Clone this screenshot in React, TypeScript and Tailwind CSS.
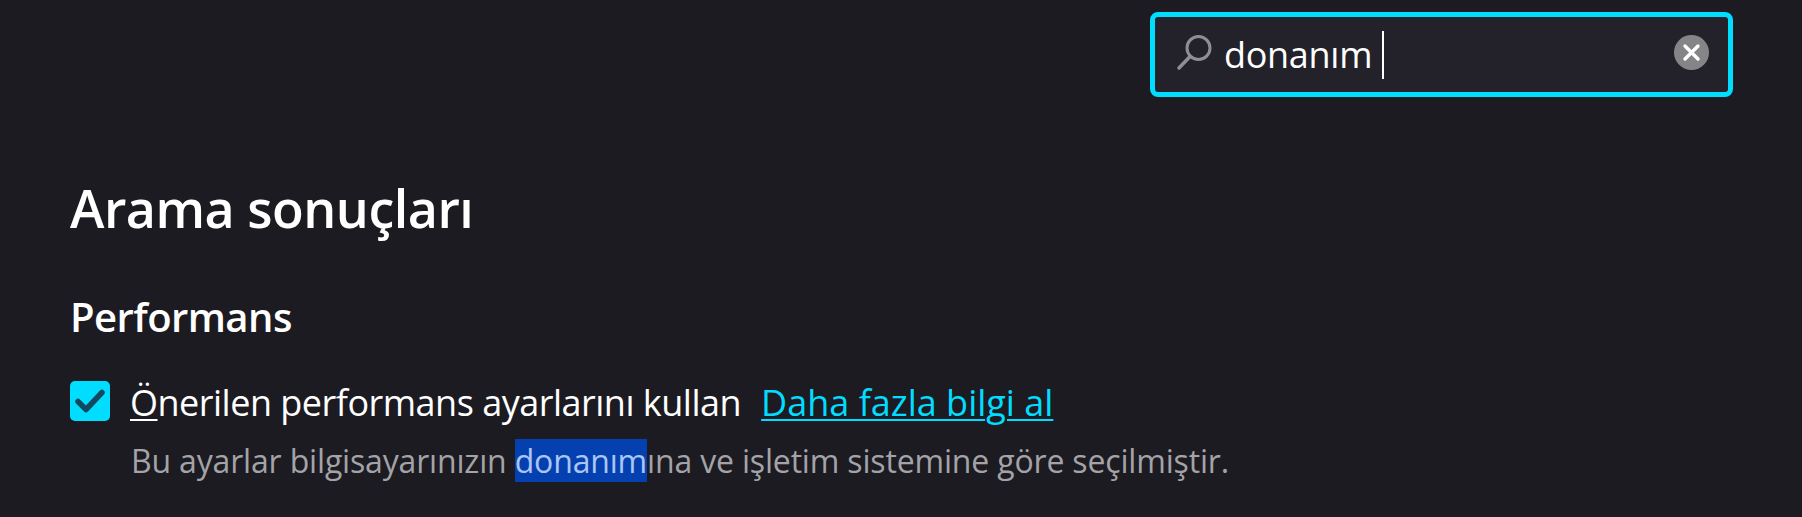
export default function App() {
  return (
    <div className="h-[517px] w-[1802px] overflow-hidden bg-[#1c1b22] pl-[70px] pt-[12px] text-white font-['Open_Sans','Noto_Sans',sans-serif]">
      <div className="flex justify-end pr-[69px]">
        <div className="flex h-[85px] w-[583px] items-center rounded-[8px] border-[5px] border-[#00ddff] bg-[#23222b] pl-[21px] pr-[19px]">
          <svg width="38" height="38" viewBox="0 0 38 38" fill="none" className="mb-[5px] shrink-0">
            <circle cx="22.5" cy="15" r="11.5" stroke="#8f8f93" strokeWidth="3" />
            <path d="M14 23.5 L3 35" stroke="#8f8f93" strokeWidth="3.5" strokeLinecap="round" />
          </svg>
          <span className="ml-[10px] text-[36px] leading-none tracking-[-0.3px]">donanım</span>
          <span className="ml-[10px] h-[48px] w-[2px] bg-white" />
          <span className="mb-[4px] ml-auto flex h-[35px] w-[35px] items-center justify-center rounded-full bg-[#858588]">
            <svg width="19" height="19" viewBox="0 0 19 19" fill="none">
              <path d="M3 3 L16 16 M16 3 L3 16" stroke="#fff" strokeWidth="3.4" strokeLinecap="round" />
            </svg>
          </span>
        </div>
      </div>
      <h1 className="mt-[77px] text-[52px] font-semibold leading-[68px] tracking-[-0.5px]">Arama sonuçları</h1>
      <h2 className="mt-[51px] text-[40px] font-semibold leading-[48px] tracking-[-0.55px]">Performans</h2>
      <div className="mt-[35px] flex items-center">
        <span className="flex h-[40px] w-[40px] items-center justify-center rounded-[5px] bg-[#00ddff]">
          <svg width="30" height="26" viewBox="0 0 30 26" fill="none">
            <path d="M3 13.5 L11 21.5 L27 4.5" stroke="#124860" strokeWidth="5.5" strokeLinecap="round" strokeLinejoin="round" />
          </svg>
        </span>
        <span className="ml-[20px] pt-[4px] text-[36px] leading-[46px] tracking-[-0.5px]"><span className="underline decoration-2 underline-offset-[3px]">Ö</span>nerilen performans ayarlarını kullan</span>
        <a className="ml-[20px] pt-[4px] text-[36px] leading-[46px] text-[#00ddff] underline decoration-2 underline-offset-[3px]">Daha fazla bilgi al</a>
      </div>
      <p className="mt-[13px] pl-[61px] text-[32px] leading-[44px] tracking-[-0.17px] text-[#a3a3a8]">
        Bu ayarlar bilgisayarınızın <mark className="bg-[#0540b0] text-[#a9c6f5]">donanım</mark>ına ve işletim sistemine göre seçilmiştir.
      </p>
    </div>
  );
}
